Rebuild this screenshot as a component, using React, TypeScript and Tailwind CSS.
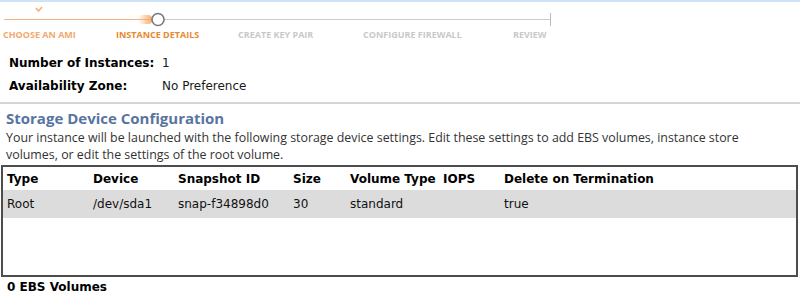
import type { ReactNode } from "react";

const steps = [
  { label: "CHOOSE AN AMI", width: "w-[113px]", color: "text-[#f2a96e]" },
  { label: "INSTANCE DETAILS", width: "w-[122px]", color: "text-[#e8892f]" },
  { label: "CREATE KEY PAIR", width: "w-[125px]", color: "text-[#c9c9c9]" },
  { label: "CONFIGURE FIREWALL", width: "w-[150px]", color: "text-[#c9c9c9]" },
  { label: "REVIEW", width: "w-[60px]", color: "text-[#c9c9c9]" },
];

const columns = ["Type", "Device", "Snapshot ID", "Size", "Volume Type", "IOPS", "Delete on Termination"];
const rootRow = ["Root", "/dev/sda1", "snap-f34898d0", "30", "standard", "", "true"];

const gridCols = "grid grid-cols-[86px_85px_115px_57px_93px_61px_1fr]";

function Stepper() {
  return (
    <div className="relative h-[40px]">
      <svg className="absolute left-0 top-0" width="800" height="26" viewBox="0 0 800 26">
        <defs>
          <linearGradient id="glow" x1="0" x2="1" y1="0" y2="0">
            <stop offset="0" stopColor="#f7a35c" stopOpacity="0" />
            <stop offset="1" stopColor="#f7a35c" stopOpacity="0.9" />
          </linearGradient>
        </defs>
        <path d="M36 6 L38.5 9 L42 5" fill="none" stroke="#f4b07a" strokeWidth="1.6" />
        <line x1="4" y1="17.5" x2="152" y2="17.5" stroke="#f5b384" strokeWidth="1" />
        <rect x="138" y="13" width="14" height="9" rx="4" fill="url(#glow)" />
        <line x1="164" y1="17.5" x2="550" y2="17.5" stroke="#cccccc" strokeWidth="1" />
        <line x1="550.5" y1="11" x2="550.5" y2="24" stroke="#bbbbbb" strokeWidth="1" />
        <circle cx="158" cy="17.5" r="6" fill="#ffffff" stroke="#7a7a7a" strokeWidth="1.6" />
      </svg>
      <div className="absolute left-0 top-[27px] flex pl-[3px] font-['Open_Sans',sans-serif] text-[9px] font-bold leading-[11px]">
        {steps.map((step) => (
          <span key={step.label} className={`${step.width} ${step.color} shrink-0`}>
            {step.label}
          </span>
        ))}
      </div>
    </div>
  );
}

function FieldRow({ label, children }: { label: string; children: ReactNode }) {
  return (
    <div className="flex h-[23px] items-center pl-[9px]">
      <span className="w-[153px] shrink-0 font-bold text-black">{label}</span>
      <span className="text-[#1a1a1a]">{children}</span>
    </div>
  );
}

export default function App() {
  return (
    <div className="h-[300px] w-[800px] overflow-hidden bg-white font-['DejaVu_Sans',sans-serif] text-[12px]">
      <div className="h-[2px] bg-[#cfe3f6]" />
      <Stepper />

      <div className="pt-[9px]">
        <FieldRow label="Number of Instances:">1</FieldRow>
        <FieldRow label="Availability Zone:">No Preference</FieldRow>
      </div>

      <div className="mt-[5px] h-[2px] bg-[#d6d6d6]" />

      <h2 className="mt-[4px] pl-[6px] font-['Open_Sans',sans-serif] text-[15px] font-bold leading-[20px] text-[#5874a1]">
        Storage Device Configuration
      </h2>
      <p className="pl-[6px] pt-[1px] font-['Open_Sans',sans-serif] text-[12.4px] leading-[17px] text-[#333333]">
        Your instance will be launched with the following storage device settings. Edit these settings to add EBS volumes, instance store
        <br />
        volumes, or edit the settings of the root volume.
      </p>

      <div className="ml-[1px] mt-[2px] h-[112px] w-[797px] border-2 border-[#4d4d4d]">
        <div className={`${gridCols} h-[23px] items-center pl-[4px] font-bold text-black`}>
          {columns.map((col) => (
            <span key={col} className="whitespace-nowrap">
              {col}
            </span>
          ))}
        </div>
        <div className={`${gridCols} h-[28px] items-center bg-[#dcdcdc] pl-[4px] text-[#111111]`}>
          {rootRow.map((cell, i) => (
            <span key={i} className="whitespace-nowrap">
              {cell}
            </span>
          ))}
        </div>
      </div>

      <div className="pl-[7px] pt-[2px] font-bold leading-[16px] text-black">0 EBS Volumes</div>
    </div>
  );
}
